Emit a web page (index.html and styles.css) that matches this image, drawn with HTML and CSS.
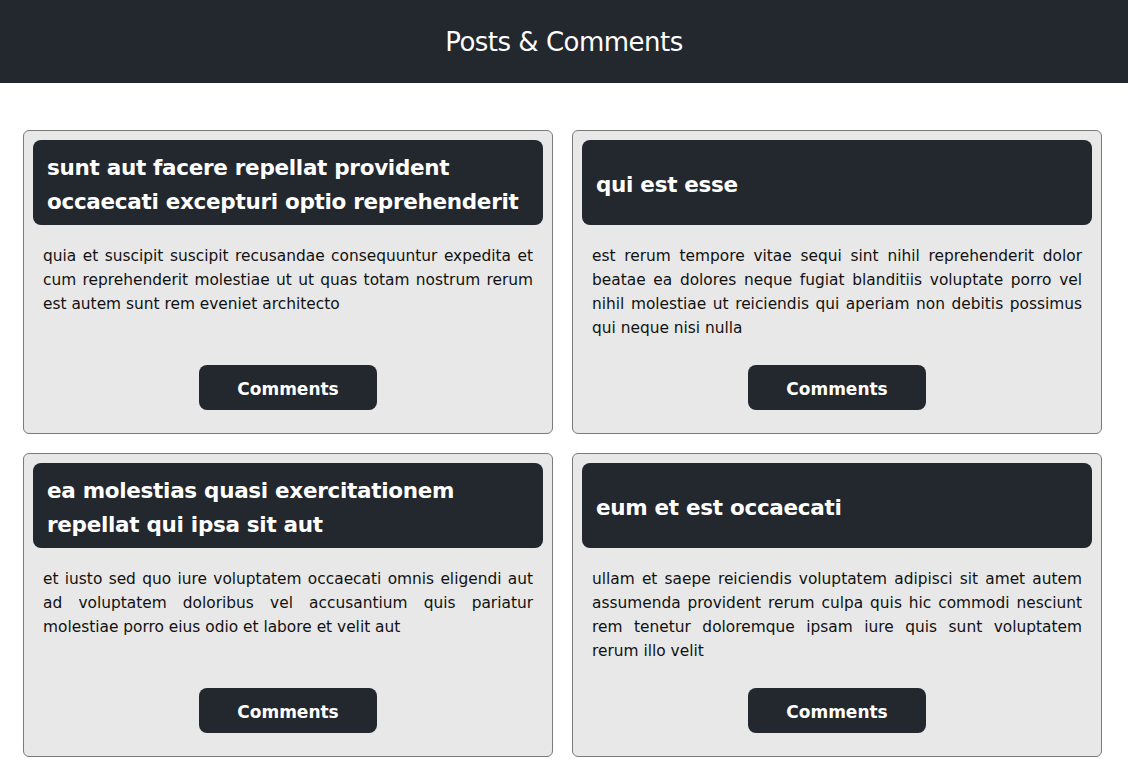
FILE: index.html
```html
<!DOCTYPE html>
<html lang="en">
<head>
<meta charset="utf-8">
<title>Posts &amp; Comments</title>
<link rel="stylesheet" href="styles.css">
</head>
<body>
<header class="topbar">
  <h1 class="topbar-title">Posts &amp; Comments</h1>
</header>
<main class="posts">
  <article class="post">
    <div class="post-head"><h2 class="post-title">sunt aut facere repellat provident occaecati excepturi optio reprehenderit</h2></div>
    <p class="post-body">quia et suscipit suscipit recusandae consequuntur expedita et cum reprehenderit molestiae ut ut quas totam nostrum rerum est autem sunt rem eveniet architecto</p>
    <button class="post-btn">Comments</button>
  </article>
  <article class="post">
    <div class="post-head"><h2 class="post-title">qui est esse</h2></div>
    <p class="post-body">est rerum tempore vitae sequi sint nihil reprehenderit dolor beatae ea dolores neque fugiat blanditiis voluptate porro vel nihil molestiae ut reiciendis qui aperiam non debitis possimus qui neque nisi nulla</p>
    <button class="post-btn">Comments</button>
  </article>
  <article class="post">
    <div class="post-head"><h2 class="post-title">ea molestias quasi exercitationem repellat qui ipsa sit aut</h2></div>
    <p class="post-body">et iusto sed quo iure voluptatem occaecati omnis eligendi aut ad voluptatem doloribus vel accusantium quis pariatur molestiae porro eius odio et labore et velit aut</p>
    <button class="post-btn">Comments</button>
  </article>
  <article class="post">
    <div class="post-head"><h2 class="post-title">eum et est occaecati</h2></div>
    <p class="post-body">ullam et saepe reiciendis voluptatem adipisci sit amet autem assumenda provident rerum culpa quis hic commodi nesciunt rem tenetur doloremque ipsam iure quis sunt voluptatem rerum illo velit</p>
    <button class="post-btn">Comments</button>
  </article>
</main>
</body>
</html>
```

FILE: styles.css
```css
* { box-sizing: border-box; }
html, body { margin: 0; padding: 0; background: #ffffff; }
body {
  font-family: "Comic Sans MS", "DejaVu Sans", sans-serif;
  color: #111;
}
.topbar {
  background: #23272e;
  height: 83px;
  display: flex;
  align-items: center;
  justify-content: center;
}
.topbar-title {
  margin: 0;
  color: #fff;
  font-size: 26px;
  font-weight: normal;
  letter-spacing: -0.5px;
}
.posts {
  display: grid;
  grid-template-columns: 530px 530px;
  column-gap: 19px;
  row-gap: 19px;
  padding: 47px 0 0 23px;
}
.post {
  height: 304px;
  background: #e8e8e8;
  border: 1px solid #7a7a7a;
  border-radius: 6px;
  padding: 9px 9px 23px;
  display: flex;
  flex-direction: column;
}
.post-head {
  background: #23272e;
  border-radius: 8px;
  height: 85px;
  display: flex;
  align-items: center;
  padding: 4px 14px 0;
}
.post-title {
  margin: 0;
  color: #fff;
  font-size: 21.5px;
  line-height: 34px;
  font-weight: bold;
  letter-spacing: -0.3px;
}
.post-body {
  margin: 19px 10px 0;
  font-size: 15.4px;
  line-height: 24px;
  text-align: justify;
}
.post-btn {
  margin-top: auto;
  align-self: center;
  width: 178px;
  height: 45px;
  padding-top: 3px;
  border: none;
  border-radius: 8px;
  background: #23272e;
  color: #fff;
  font-family: inherit;
  font-size: 17px;
  font-weight: bold;
}
```
